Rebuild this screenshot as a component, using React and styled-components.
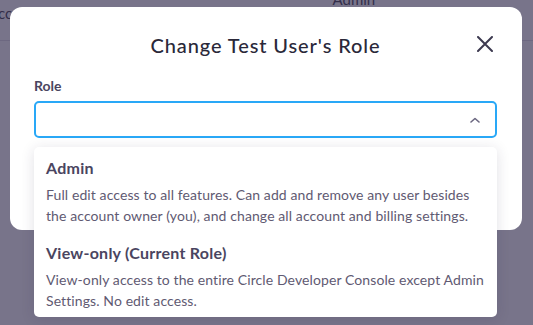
import React from "react"
import styled, { createGlobalStyle } from "styled-components"

const GlobalStyle = createGlobalStyle`
  html, body {
    margin: 0;
    padding: 0;
    background: #fff;
    font-family: "Lato", "Inter", sans-serif;
  }
`

const Page = styled.div`
  width: 533px;
  height: 325px;
  overflow: hidden;
  position: relative;
`

const PageHeader = styled.div`
  display: flex;
  align-items: flex-start;
  height: 40px;
  border-bottom: 1px solid #dcdae2;
  font-size: 15px;
  color: #2f2c3d;
`

const PageText = styled.span`
  margin-left: ${(p) => p.offset || 0}px;
  margin-top: ${(p) => p.top || 0}px;
`

const Overlay = styled.div`
  position: absolute;
  inset: 0;
  background: rgba(54, 47, 80, 0.67);
`

const Modal = styled.div`
  position: absolute;
  top: 7px;
  left: 10px;
  width: 512px;
  height: 223px;
  background: #fff;
  border-radius: 12px;
  box-sizing: border-box;
  padding: 0 25px 0 24px;
`

const Header = styled.div`
  display: flex;
  align-items: center;
  justify-content: center;
  position: relative;
  padding-top: 24px;
  height: 28px;
`

const Title = styled.h2`
  margin: 0;
  font-size: 20px;
  line-height: 28px;
  font-weight: 500;
  letter-spacing: 0.9px;
  color: #2a2839;
`

const Close = styled.button`
  position: absolute;
  right: 3px;
  top: 28px;
  width: 18px;
  height: 18px;
  padding: 0;
  border: 0;
  background: none;
  display: flex;
  align-items: center;
  justify-content: center;
  color: #3d3a50;
`

const Field = styled.div`
  margin-top: 17px;
  position: relative;
`

const Label = styled.div`
  font-size: 14px;
  line-height: 20px;
  font-weight: 700;
  color: #4a4560;
  margin-bottom: 5px;
`

const Select = styled.div`
  height: 37px;
  box-sizing: border-box;
  border: 2px solid #29a8f7;
  border-radius: 5px;
  display: flex;
  align-items: center;
  justify-content: flex-end;
  padding-right: 15px;
  color: #6b6780;
`

const Menu = styled.div`
  position: absolute;
  top: 71px;
  left: 0;
  right: 0;
  background: #fff;
  border-radius: 5px;
  box-shadow: 0 2px 14px rgba(40, 34, 70, 0.14);
  padding: 3px 0;
`

const Option = styled.div`
  padding: 7px 6px 8px 12px;

  & + & {
    padding-top: 8px;
  }

  &:last-child {
    padding-bottom: 3px;
  }
`

const OptionTitle = styled.div`
  font-size: 16px;
  line-height: 22px;
  font-weight: 700;
  letter-spacing: 0.25px;
  color: #4a4560;
`

const OptionText = styled.div`
  margin-top: 5px;
  font-size: 14px;
  line-height: 21px;
  letter-spacing: 0.1px;
  color: #5f5a72;
`

const options = [
  {
    title: "Admin",
    text: "Full edit access to all features. Can add and remove any user besides the account owner (you), and change all account and billing settings.",
  },
  {
    title: "View-only (Current Role)",
    text: "View-only access to the entire Circle Developer Console except Admin Settings. No edit access.",
  },
]

export default function App() {
  return (
    <Page>
      <GlobalStyle />
      <PageHeader>
        <PageText offset={-12} top={4}>Account</PageText>
        <PageText offset={290} top={-10}>Admin</PageText>
      </PageHeader>
      <Overlay />
      <Modal>
        <Header>
          <Title>Change Test User's Role</Title>
          <Close aria-label="Close">
            <svg width="16" height="16" viewBox="0 0 16 16" fill="none">
              <path d="M1 1L15 15M15 1L1 15" stroke="currentColor" strokeWidth="2" strokeLinecap="round" />
            </svg>
          </Close>
        </Header>
        <Field>
          <Label>Role</Label>
          <Select>
            <svg width="10" height="6" viewBox="0 0 10 6" fill="none">
              <path d="M1 5L5 1.5L9 5" stroke="currentColor" strokeWidth="1.6" strokeLinecap="round" strokeLinejoin="round" />
            </svg>
          </Select>
          <Menu>
            {options.map((o) => (
              <Option key={o.title}>
                <OptionTitle>{o.title}</OptionTitle>
                <OptionText>{o.text}</OptionText>
              </Option>
            ))}
          </Menu>
        </Field>
      </Modal>
    </Page>
  )
}
